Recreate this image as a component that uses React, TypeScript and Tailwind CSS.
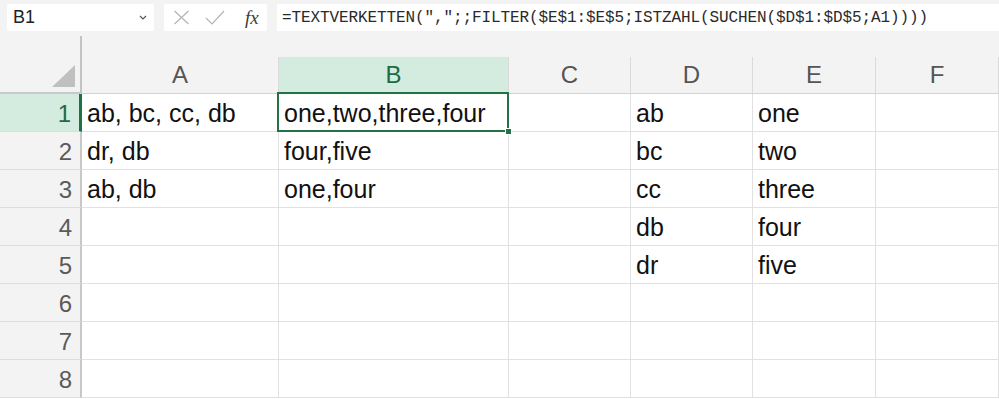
import React from "react";

const cols = [
  { key: "A", w: "w-[197px]" },
  { key: "B", w: "w-[230px]" },
  { key: "C", w: "w-[122px]" },
  { key: "D", w: "w-[122px]" },
  { key: "E", w: "w-[123px]" },
  { key: "F", w: "w-[123px]" },
];

const data: Record<number, string[]> = {
  1: ["ab, bc, cc, db", "one,two,three,four", "", "ab", "one", ""],
  2: ["dr, db", "four,five", "", "bc", "two", ""],
  3: ["ab, db", "one,four", "", "cc", "three", ""],
  4: ["", "", "", "db", "four", ""],
  5: ["", "", "", "dr", "five", ""],
  6: ["", "", "", "", "", ""],
  7: ["", "", "", "", "", ""],
  8: ["", "", "", "", "", ""],
};

const formula = '=TEXTVERKETTEN(",";;FILTER($E$1:$E$5;ISTZAHL(SUCHEN($D$1:$D$5;A1))))';

function FormulaBar() {
  return (
    <div className="flex h-[35px] items-start gap-[10px] bg-[#f3f3f3] pl-[7px] pt-[4px]">
      {/* Name box */}
      <div className="flex h-[27px] w-[147px] items-center justify-between rounded-[2px] bg-white pl-[6px] pr-[7px]">
        <span className="text-[18px] text-[#222] font-['Liberation_Sans',sans-serif]">B1</span>
        <svg width="8" height="5" viewBox="0 0 8 5" fill="none">
          <path d="M1 1l3 3 3-3" stroke="#555" strokeWidth="1.2" />
        </svg>
      </div>
      {/* Cancel / enter / fx */}
      <div className="flex h-[27px] w-[103px] items-center rounded-[2px] bg-white pl-[9px]">
        <svg width="17" height="15" viewBox="0 0 17 15" fill="none">
          <path d="M1.5 1L15.5 14M15.5 1L1.5 14" stroke="#b4b4b4" strokeWidth="1.2" />
        </svg>
        <svg className="ml-[15px]" width="20" height="15" viewBox="0 0 20 15" fill="none">
          <path d="M1 8l6 6L19 1" stroke="#b4b4b4" strokeWidth="1.2" />
        </svg>
        <span className="ml-[20px] text-[19px] italic leading-none text-[#3c3c3c] font-['Liberation_Serif',serif]">
          fx
        </span>
      </div>
      {/* Formula text */}
      <div className="flex h-[27px] flex-1 items-center bg-white pl-[5px]">
        <span className="whitespace-pre text-[16px] tracking-[-0.1px] text-[#2a2a2a] font-['Liberation_Mono',monospace]">
          {formula}
        </span>
      </div>
    </div>
  );
}

function HeaderRow() {
  return (
    <div className="flex h-[59px] border-b border-[#d3d3d3] bg-[#f3f3f3]">
      <div className="relative w-[82px] pt-[1px]">
        <div className="flex h-full items-end justify-end border-r-2 border-[#c3c3c3] pb-[6px] pr-[5px]">
          <svg width="23" height="22" viewBox="0 0 23 22">
            <path d="M0 22L23 0V22Z" fill="#c0c0c0" />
          </svg>
        </div>
        <div className="absolute bottom-[-1px] left-0 h-[2px] w-[80px] bg-[#c8c8c8]" />
      </div>
      {cols.map((c) => (
        <div key={c.key} className={`${c.w} flex flex-col justify-end`}>
          <div
            className={`flex h-[36px] items-end justify-center border-r border-[#dadada] pb-[6px] text-[24px] leading-[24px] font-['Liberation_Sans',sans-serif] ${
              c.key === "B" ? "bg-[#d3ecdf] text-[#1e6b41]" : "text-[#555]"
            }`}
          >
            {c.key}
          </div>
        </div>
      ))}
    </div>
  );
}

function Row({ n }: { n: number }) {
  const active = n === 1;
  return (
    <div className="flex h-[38px]">
      <div
        className={`flex w-[82px] items-end justify-end border-b border-[#dedede] pb-[5px] pr-[8px] text-[24px] leading-[24px] font-['Liberation_Sans',sans-serif] ${
          active
            ? "border-r-[3px] border-r-[#1e7145] bg-[#d3ecdf] text-[#1e6b41]"
            : "border-r-2 border-r-[#c8c8c8] bg-[#f3f3f3] text-[#5a5a5a]"
        }`}
      >
        {n}
      </div>
      {cols.map((c, i) => (
        <div
          key={c.key}
          className={`${c.w} relative flex items-end border-b border-r border-[#e1e1e1] pb-[5px] pl-[5px] text-[25px] leading-[25px] text-[#111] font-['Liberation_Sans',sans-serif] whitespace-nowrap`}
        >
          {data[n][i]}
          {active && c.key === "B" && (
            <div className="absolute z-10 -left-[2px] -top-[2px] -right-[1px] bottom-[-1px] border-2 border-[#217346]">
              <div className="absolute -bottom-[5px] -right-[5px] h-[7px] w-[7px] border border-white bg-[#217346]" />
            </div>
          )}
        </div>
      ))}
    </div>
  );
}

export default function App() {
  return (
    <div className="h-[399px] w-[999px] overflow-hidden bg-white">
      <FormulaBar />
      <HeaderRow />
      {[1, 2, 3, 4, 5, 6, 7, 8].map((n) => (
        <Row key={n} n={n} />
      ))}
    </div>
  );
}
